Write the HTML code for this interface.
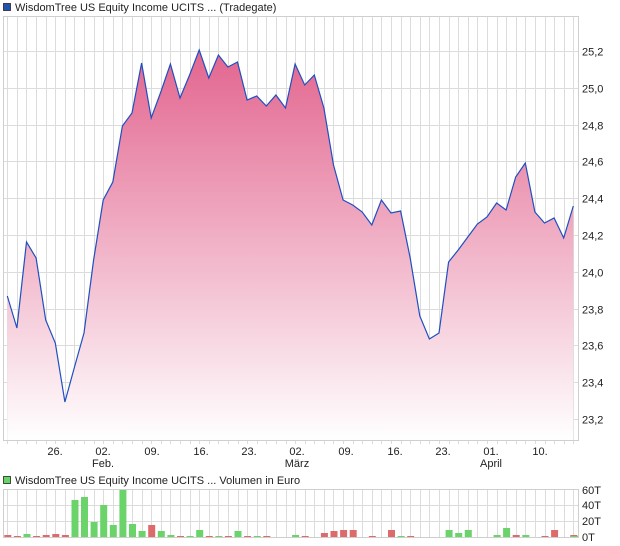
<!DOCTYPE html>
<html><head><meta charset="utf-8"><style>
html,body{margin:0;padding:0;background:#fff;width:620px;height:546px;overflow:hidden}
svg{display:block}
text{font-family:"Liberation Sans",sans-serif;font-size:11px;fill:#222}
</style></head><body>
<svg id="s" width="620" height="546" xmlns="http://www.w3.org/2000/svg">
<defs><linearGradient id="g" gradientUnits="userSpaceOnUse" x1="0" y1="45" x2="0" y2="440">
<stop offset="0" stop-color="#e2638d"/><stop offset="1" stop-color="#ffffff"/></linearGradient></defs>
<g id="grid"></g>
<path id="area" fill="url(#g)"/>
<path id="line" fill="none" stroke="#1f4fc0" stroke-width="1.2"/>
<g id="vol"></g>
<rect x="3.5" y="16.5" width="575" height="424" fill="none" stroke="#cfcfcf"/>
<rect x="3.5" y="489.5" width="575" height="48" fill="none" stroke="#cfcfcf"/>
<rect x="3.5" y="3.5" width="7" height="7" fill="#1f55b0" stroke="#222" stroke-width="0.8"/>
<text x="15" y="11">WisdomTree US Equity Income UCITS ... (Tradegate)</text>
<rect x="3.5" y="476.5" width="7" height="7" fill="#66d466" stroke="#222" stroke-width="0.8"/>
<text x="15" y="484">WisdomTree US Equity Income UCITS ... Volumen in Euro</text>
<g id="lab"></g>
</svg>
<script>
var NS="http://www.w3.org/2000/svg";
function el(p,t,a,txt){var e=document.createElementNS(NS,t);for(var k in a)e.setAttribute(k,a[k]);if(txt)e.textContent=txt;document.getElementById(p).appendChild(e);return e;}
var ys=[296,328,242,258,320,343,402,367,333,260,200,182,126,113,63,118,92,64,98,75,50,78,55,67,62,100,96,106,95,108,64,85,75,108,165,200,205,212,225,200,213,211,258,316,339,333,262,250,237,224,217,203,210,177,163,212,223,218,238,206];
var x0=7.3,st=(573.3-7.3)/59;
var G="#dcdcdc";
for(var i=0;i<60;i++){var x=Math.round(x0+st*i)+0.5;
 el("grid","line",{x1:x,y1:17,x2:x,y2:440,stroke:G});
 el("grid","line",{x1:x,y1:490,x2:x,y2:537,stroke:G});
 el("grid","line",{x1:x,y1:441,x2:x,y2:444,stroke:G});}
var lv=["25,2","25,0","24,8","24,6","24,4","24,2","24,0","23,8","23,6","23,4","23,2"];
for(var j=0;j<11;j++){var y=Math.round(51+36.8*j)+0.5;
 el("grid","line",{x1:3,y1:y,x2:578,y2:y,stroke:G});
 el("lab","text",{x:582,y:y+4},lv[j]);}
var vl=[["60T",490],["40T",505],["20T",521],["0T",537]];
vl.forEach(function(v){if(v[1]>490&&v[1]<537)el("grid","line",{x1:3,y1:v[1]+0.5,x2:578,y2:v[1]+0.5,stroke:G});el("lab","text",{x:582,y:v[1]+4},v[0]);});
var d="";
for(var i=0;i<60;i++){var x=x0+st*i;d+=(i?"L":"M")+x.toFixed(1)+" "+ys[i];}
var a=d+"L573.3 440L7.3 440Z";
document.getElementById("line").setAttribute("d",d);
document.getElementById("area").setAttribute("d",a);
var xl=[["26.",55],["02.",103],["09.",152],["16.",201],["23.",249],["02.",297],["09.",346],["16.",395],["23.",443],["01.",491],["10.",540]];
xl.forEach(function(v){el("lab","text",{x:v[1],y:455,"text-anchor":"middle"},v[0]);});
[["Feb.",103],["März",297],["April",491]].forEach(function(v){el("lab","text",{x:v[1],y:467,"text-anchor":"middle"},v[0]);});
var vb=[[2,'r'],[1,'r'],[3,'g'],[1,'r'],[2,'r'],[3,'r'],[2,'r'],[37,'g'],[40,'g'],[15,'g'],[32,'g'],[12,'g'],[48,'g'],[13,'g'],[6,'g'],[12,'r'],[6,'g'],[2,'g'],[1,'r'],[1,'g'],[7,'g'],[1,'r'],[1,'g'],[1,'r'],[6,'g'],[1,'r'],[1,'g'],[1,'r'],[0,'g'],[0,'g'],[2,'g'],[1,'r'],[0,'g'],[4,'r'],[6,'r'],[7,'r'],[7,'r'],[0,'g'],[1,'r'],[0,'g'],[7,'r'],[1,'g'],[1,'r'],[0,'g'],[0,'g'],[0,'g'],[7,'g'],[4,'g'],[7,'g'],[0,'g'],[0,'g'],[2,'g'],[9,'g'],[2,'r'],[2,'g'],[0,'g'],[1,'r'],[7,'r'],[0,'g'],[2,'r']];
for(var i=0;i<vb.length;i++){var h=vb[i][0];if(!h)continue;var x=x0+st*i-3;
 el("vol","rect",{x:x.toFixed(1),y:537-h,width:7,height:h,fill:vb[i][1]=='r'?'#dd6b6b':'#6ad46a'});}
el("vol","rect",{x:571,y:536,width:7,height:1,fill:'#6ad46a'});
</script>
</body></html>
